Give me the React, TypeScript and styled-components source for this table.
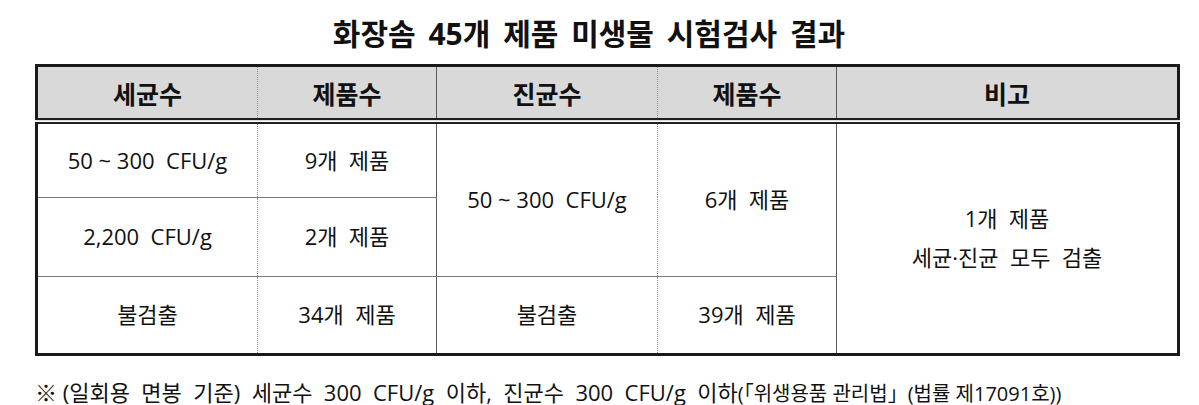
import styled, { createGlobalStyle } from "styled-components";

const GlobalStyle = createGlobalStyle`
  html, body {
    margin: 0;
    padding: 0;
    background: #ffffff;
  }
  body {
    font-family: "Open Sans", "Noto Sans CJK KR", sans-serif;
    color: #111111;
  }
`;

const Page = styled.div`
  width: 1199px;
  height: 405px;
  overflow: hidden;
  padding: 14px 0 0 35px;
  box-sizing: border-box;
`;

const Title = styled.h1`
  margin: 0 0 10px;
  width: 1108px;
  height: 40px;
  line-height: 40px;
  text-align: center;
  font-size: 30px;
  font-weight: 700;
  word-spacing: 5px;
  color: #111;
`;

const Table = styled.table`
  width: 1144px;
  border-collapse: collapse;
  table-layout: fixed;
  border: 3px solid #1a1a1a;
`;

type Divider = "dotted" | "solid";

const dividerLine = (d?: Divider) =>
  d === "dotted" ? "1px dotted #8a8a8a" : d === "solid" ? "1px solid #5a5a5a" : "none";

const HeadCell = styled.th<{ $divider?: Divider }>`
  height: 51px;
  padding: 0;
  background: #d9d9d9;
  font-size: 25px;
  font-weight: 700;
  color: #111;
  text-align: center;
  vertical-align: middle;
  border-bottom: 6px double #1f1f1f;
  border-right: ${(p) => dividerLine(p.$divider)};
`;

const Row = styled.tr<{ $h: number }>`
  height: ${(p) => p.$h}px;
`;

const Cell = styled.td<{ $divider?: Divider }>`
  padding: 0;
  font-size: 22px;
  line-height: 39px;
  color: #111;
  text-align: center;
  vertical-align: middle;
  border-bottom: 1px solid #7a7a7a;
  border-right: ${(p) => dividerLine(p.$divider)};
  white-space: pre;
`;

const Note = styled.p`
  margin: 20px 0 0;
  line-height: 32px;
  font-size: 22px;
  color: #111;
  white-space: pre;
`;

const Small = styled.span`
  font-size: 20px;
`;

export default function App() {
  return (
    <>
      <GlobalStyle />
      <Page>
        <Title>화장솜 45개 제품 미생물 시험검사 결과</Title>
        <Table>
          <colgroup>
            <col style={{ width: 221 }} />
            <col style={{ width: 179 }} />
            <col style={{ width: 221 }} />
            <col style={{ width: 179 }} />
            <col style={{ width: 342 }} />
          </colgroup>
          <thead>
            <tr>
              <HeadCell $divider="dotted">세균수</HeadCell>
              <HeadCell $divider="solid">제품수</HeadCell>
              <HeadCell $divider="dotted">진균수</HeadCell>
              <HeadCell $divider="solid">제품수</HeadCell>
              <HeadCell>비고</HeadCell>
            </tr>
          </thead>
          <tbody>
            <Row $h={76}>
              <Cell $divider="dotted">{"50 ~ 300  CFU/g"}</Cell>
              <Cell $divider="solid">{"9개  제품"}</Cell>
              <Cell $divider="dotted" rowSpan={2}>{"50 ~ 300  CFU/g"}</Cell>
              <Cell $divider="solid" rowSpan={2}>{"6개  제품"}</Cell>
              <Cell rowSpan={3}>
                {"1개  제품"}
                <br />
                {"세균·진균  모두  검출"}
              </Cell>
            </Row>
            <Row $h={79}>
              <Cell $divider="dotted">{"2,200  CFU/g"}</Cell>
              <Cell $divider="solid">{"2개  제품"}</Cell>
            </Row>
            <Row $h={78}>
              <Cell $divider="dotted">불검출</Cell>
              <Cell $divider="solid">{"34개  제품"}</Cell>
              <Cell $divider="dotted">불검출</Cell>
              <Cell $divider="solid">{"39개  제품"}</Cell>
            </Row>
          </tbody>
        </Table>
        <Note>
          {"※ (일회용  면봉  기준)  세균수  300  CFU/g  이하,  진균수  300  CFU/g  이하"}
          <Small>(「위생용품 관리법」(법률 제17091호))</Small>
        </Note>
      </Page>
    </>
  );
}
